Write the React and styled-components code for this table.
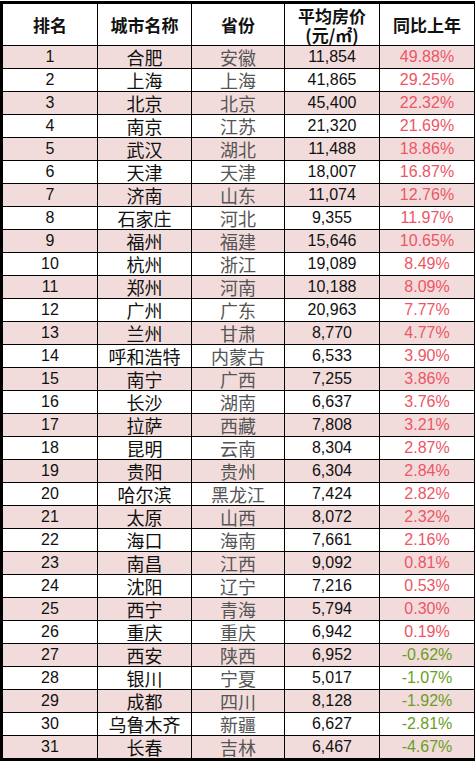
import React from "react";
import styled, { createGlobalStyle } from "styled-components";

const rows = [
  [1, "合肥", "安徽", "11,854", "49.88%"],
  [2, "上海", "上海", "41,865", "29.25%"],
  [3, "北京", "北京", "45,400", "22.32%"],
  [4, "南京", "江苏", "21,320", "21.69%"],
  [5, "武汉", "湖北", "11,488", "18.86%"],
  [6, "天津", "天津", "18,007", "16.87%"],
  [7, "济南", "山东", "11,074", "12.76%"],
  [8, "石家庄", "河北", "9,355", "11.97%"],
  [9, "福州", "福建", "15,646", "10.65%"],
  [10, "杭州", "浙江", "19,089", "8.49%"],
  [11, "郑州", "河南", "10,188", "8.09%"],
  [12, "广州", "广东", "20,963", "7.77%"],
  [13, "兰州", "甘肃", "8,770", "4.77%"],
  [14, "呼和浩特", "内蒙古", "6,533", "3.90%"],
  [15, "南宁", "广西", "7,255", "3.86%"],
  [16, "长沙", "湖南", "6,637", "3.76%"],
  [17, "拉萨", "西藏", "7,808", "3.21%"],
  [18, "昆明", "云南", "8,304", "2.87%"],
  [19, "贵阳", "贵州", "6,304", "2.84%"],
  [20, "哈尔滨", "黑龙江", "7,424", "2.82%"],
  [21, "太原", "山西", "8,072", "2.32%"],
  [22, "海口", "海南", "7,661", "2.16%"],
  [23, "南昌", "江西", "9,092", "0.81%"],
  [24, "沈阳", "辽宁", "7,216", "0.53%"],
  [25, "西宁", "青海", "5,794", "0.30%"],
  [26, "重庆", "重庆", "6,942", "0.19%"],
  [27, "西安", "陕西", "6,952", "-0.62%"],
  [28, "银川", "宁夏", "5,017", "-1.07%"],
  [29, "成都", "四川", "8,128", "-1.92%"],
  [30, "乌鲁木齐", "新疆", "6,627", "-2.81%"],
  [31, "长春", "吉林", "6,467", "-4.67%"],
];

const GlobalStyle = createGlobalStyle`
  body {
    margin: 0;
    background: #fff;
  }
`;

const Wrapper = styled.div`
  width: 475px;
  height: 762px;
  overflow: hidden;
  background: #fff;
`;

const Table = styled.table`
  width: 474px;
  margin: 1px 0 0 0;
  border-collapse: collapse;
  table-layout: fixed;
  border: 3px solid #000;
`;

const HeadCell = styled.th`
  height: 41px;
  padding: 0;
  border: 1px solid #000;
  font-family: "Noto Sans CJK SC", sans-serif;
  font-weight: 700;
  font-size: 17px;
  line-height: 19px;
  color: #111;
  text-align: center;
`;

const Row = styled.tr`
  background: ${(p) => (p.$pink ? "#f2dcdb" : "#fff")};
`;

const Cell = styled.td`
  height: 22px;
  padding: 0;
  border: 1px solid #000;
  text-align: center;
  line-height: 22px;
  white-space: nowrap;
  font-family: ${(p) =>
    p.$cjk
      ? '"Noto Sans CJK SC", sans-serif'
      : '"Liberation Sans", "Noto Sans CJK SC", sans-serif'};
  font-size: ${(p) => (p.$cjk ? "18px" : "16px")};
  color: ${(p) => p.$color || "#111"};
`;

const pctColor = (v) => (v.startsWith("-") ? "#6a9e1f" : "#ee5566");

const App = () => {
  return (
    <Wrapper>
      <GlobalStyle />
      <Table>
        <colgroup>
          <col style={{ width: 96 }} />
          <col style={{ width: 94 }} />
          <col style={{ width: 93 }} />
          <col style={{ width: 95 }} />
          <col style={{ width: 96 }} />
        </colgroup>
        <thead>
          <tr>
            <HeadCell>排名</HeadCell>
            <HeadCell>城市名称</HeadCell>
            <HeadCell>省份</HeadCell>
            <HeadCell>
              平均房价
              <br />
              (元/㎡)
            </HeadCell>
            <HeadCell>同比上年</HeadCell>
          </tr>
        </thead>
        <tbody>
          {rows.map((item) => {
            const [rank, city, prov, price, pct] = item;
            return (
              <Row key={rank} $pink={rank % 2 === 1}>
                <Cell>{rank}</Cell>
                <Cell $cjk>{city}</Cell>
                <Cell $cjk $color="#555">
                  {prov}
                </Cell>
                <Cell>{price}</Cell>
                <Cell $color={pctColor(pct)}>{pct}</Cell>
              </Row>
            );
          })}
        </tbody>
      </Table>
    </Wrapper>
  );
};

export default App;
